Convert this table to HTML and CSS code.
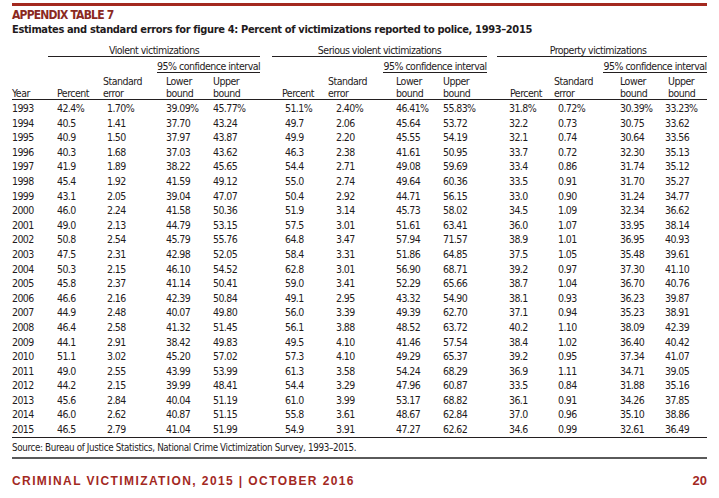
FILE: index.html
```html
<!DOCTYPE html>
<html lang="en">
<head>
<meta charset="utf-8">
<title>Appendix Table 7</title>
<link rel="stylesheet" href="styles.css">
</head>
<body>
<div class="page">
  <div class="bar"></div>
  <div class="kicker">APPENDIX TABLE 7</div>
  <h1 class="title">Estimates and standard errors for figure 4: Percent of victimizations reported to police, 1993–2015</h1>
  <table class="data">
    <colgroup>
      <col class="w-year"><col class="w55"><col class="w54"><col class="w53"><col class="w50">
      <col class="w-gap1">
      <col class="w55"><col class="w56"><col class="w57"><col class="w47">
      <col class="w-gap2">
      <col class="w57"><col class="w49"><col class="w57"><col class="w47">
    </colgroup>
    <thead>
      <tr class="h1">
        <th></th>
        <th colspan="4" class="grp">Violent victimizations</th>
        <th></th>
        <th colspan="4" class="grp">Serious violent victimizations</th>
        <th></th>
        <th colspan="4" class="grp grp-p">Property victimizations</th>
      </tr>
      <tr class="h2">
        <th colspan="3"></th>
        <th colspan="2" class="ci">95% confidence interval</th>
        <th colspan="3"></th>
        <th colspan="2" class="ci">95% confidence interval</th>
        <th colspan="3"></th>
        <th colspan="2" class="ci">95% confidence interval</th>
      </tr>
      <tr class="h3">
        <th>Year</th><th>Percent</th><th>Standard<br>error</th><th>Lower<br>bound</th><th>Upper<br>bound</th>
        <th></th>
        <th>Percent</th><th>Standard<br>error</th><th>Lower<br>bound</th><th>Upper<br>bound</th>
        <th></th>
        <th>Percent</th><th>Standard<br>error</th><th>Lower<br>bound</th><th>Upper<br>bound</th>
      </tr>
    </thead>
    <tbody>
      <tr><td>1993</td><td>42.4%</td><td>1.70%</td><td>39.09%</td><td>45.77%</td><td></td><td>51.1%</td><td>2.40%</td><td>46.41%</td><td>55.83%</td><td></td><td>31.8%</td><td>0.72%</td><td>30.39%</td><td>33.23%</td></tr>
      <tr><td>1994</td><td>40.5</td><td>1.41</td><td>37.70</td><td>43.24</td><td></td><td>49.7</td><td>2.06</td><td>45.64</td><td>53.72</td><td></td><td>32.2</td><td>0.73</td><td>30.75</td><td>33.62</td></tr>
      <tr><td>1995</td><td>40.9</td><td>1.50</td><td>37.97</td><td>43.87</td><td></td><td>49.9</td><td>2.20</td><td>45.55</td><td>54.19</td><td></td><td>32.1</td><td>0.74</td><td>30.64</td><td>33.56</td></tr>
      <tr><td>1996</td><td>40.3</td><td>1.68</td><td>37.03</td><td>43.62</td><td></td><td>46.3</td><td>2.38</td><td>41.61</td><td>50.95</td><td></td><td>33.7</td><td>0.72</td><td>32.30</td><td>35.13</td></tr>
      <tr><td>1997</td><td>41.9</td><td>1.89</td><td>38.22</td><td>45.65</td><td></td><td>54.4</td><td>2.71</td><td>49.08</td><td>59.69</td><td></td><td>33.4</td><td>0.86</td><td>31.74</td><td>35.12</td></tr>
      <tr><td>1998</td><td>45.4</td><td>1.92</td><td>41.59</td><td>49.12</td><td></td><td>55.0</td><td>2.74</td><td>49.64</td><td>60.36</td><td></td><td>33.5</td><td>0.91</td><td>31.70</td><td>35.27</td></tr>
      <tr><td>1999</td><td>43.1</td><td>2.05</td><td>39.04</td><td>47.07</td><td></td><td>50.4</td><td>2.92</td><td>44.71</td><td>56.15</td><td></td><td>33.0</td><td>0.90</td><td>31.24</td><td>34.77</td></tr>
      <tr><td>2000</td><td>46.0</td><td>2.24</td><td>41.58</td><td>50.36</td><td></td><td>51.9</td><td>3.14</td><td>45.73</td><td>58.02</td><td></td><td>34.5</td><td>1.09</td><td>32.34</td><td>36.62</td></tr>
      <tr><td>2001</td><td>49.0</td><td>2.13</td><td>44.79</td><td>53.15</td><td></td><td>57.5</td><td>3.01</td><td>51.61</td><td>63.41</td><td></td><td>36.0</td><td>1.07</td><td>33.95</td><td>38.14</td></tr>
      <tr><td>2002</td><td>50.8</td><td>2.54</td><td>45.79</td><td>55.76</td><td></td><td>64.8</td><td>3.47</td><td>57.94</td><td>71.57</td><td></td><td>38.9</td><td>1.01</td><td>36.95</td><td>40.93</td></tr>
      <tr><td>2003</td><td>47.5</td><td>2.31</td><td>42.98</td><td>52.05</td><td></td><td>58.4</td><td>3.31</td><td>51.86</td><td>64.85</td><td></td><td>37.5</td><td>1.05</td><td>35.48</td><td>39.61</td></tr>
      <tr><td>2004</td><td>50.3</td><td>2.15</td><td>46.10</td><td>54.52</td><td></td><td>62.8</td><td>3.01</td><td>56.90</td><td>68.71</td><td></td><td>39.2</td><td>0.97</td><td>37.30</td><td>41.10</td></tr>
      <tr><td>2005</td><td>45.8</td><td>2.37</td><td>41.14</td><td>50.41</td><td></td><td>59.0</td><td>3.41</td><td>52.29</td><td>65.66</td><td></td><td>38.7</td><td>1.04</td><td>36.70</td><td>40.76</td></tr>
      <tr><td>2006</td><td>46.6</td><td>2.16</td><td>42.39</td><td>50.84</td><td></td><td>49.1</td><td>2.95</td><td>43.32</td><td>54.90</td><td></td><td>38.1</td><td>0.93</td><td>36.23</td><td>39.87</td></tr>
      <tr><td>2007</td><td>44.9</td><td>2.48</td><td>40.07</td><td>49.80</td><td></td><td>56.0</td><td>3.39</td><td>49.39</td><td>62.70</td><td></td><td>37.1</td><td>0.94</td><td>35.23</td><td>38.91</td></tr>
      <tr><td>2008</td><td>46.4</td><td>2.58</td><td>41.32</td><td>51.45</td><td></td><td>56.1</td><td>3.88</td><td>48.52</td><td>63.72</td><td></td><td>40.2</td><td>1.10</td><td>38.09</td><td>42.39</td></tr>
      <tr><td>2009</td><td>44.1</td><td>2.91</td><td>38.42</td><td>49.83</td><td></td><td>49.5</td><td>4.10</td><td>41.46</td><td>57.54</td><td></td><td>38.4</td><td>1.02</td><td>36.40</td><td>40.42</td></tr>
      <tr><td>2010</td><td>51.1</td><td>3.02</td><td>45.20</td><td>57.02</td><td></td><td>57.3</td><td>4.10</td><td>49.29</td><td>65.37</td><td></td><td>39.2</td><td>0.95</td><td>37.34</td><td>41.07</td></tr>
      <tr><td>2011</td><td>49.0</td><td>2.55</td><td>43.99</td><td>53.99</td><td></td><td>61.3</td><td>3.58</td><td>54.24</td><td>68.29</td><td></td><td>36.9</td><td>1.11</td><td>34.71</td><td>39.05</td></tr>
      <tr><td>2012</td><td>44.2</td><td>2.15</td><td>39.99</td><td>48.41</td><td></td><td>54.4</td><td>3.29</td><td>47.96</td><td>60.87</td><td></td><td>33.5</td><td>0.84</td><td>31.88</td><td>35.16</td></tr>
      <tr><td>2013</td><td>45.6</td><td>2.84</td><td>40.04</td><td>51.19</td><td></td><td>61.0</td><td>3.99</td><td>53.17</td><td>68.82</td><td></td><td>36.1</td><td>0.91</td><td>34.26</td><td>37.85</td></tr>
      <tr><td>2014</td><td>46.0</td><td>2.62</td><td>40.87</td><td>51.15</td><td></td><td>55.8</td><td>3.61</td><td>48.67</td><td>62.84</td><td></td><td>37.0</td><td>0.96</td><td>35.10</td><td>38.86</td></tr>
      <tr><td>2015</td><td>46.5</td><td>2.79</td><td>41.04</td><td>51.99</td><td></td><td>54.9</td><td>3.91</td><td>47.27</td><td>62.62</td><td></td><td>34.6</td><td>0.99</td><td>32.61</td><td>36.49</td></tr>
    </tbody>
  </table>
  <p class="source">Source: Bureau of Justice Statistics, National Crime Victimization Survey, 1993–2015.</p>
  <footer class="footer">
    <span class="pub">CRIMINAL VICTIMIZATION, 2015 | OCTOBER 2016</span>
    <span class="pageno">20</span>
  </footer>
</div>
</body>
</html>
```

FILE: styles.css
```css
html, body {
  margin: 0;
  padding: 0;
  background: #ffffff;
}

.page {
  width: 695px;
  padding: 3px 12px 0 12px;
  color: #1f1b1c;
  font-family: "DejaVu Sans Condensed", "DejaVu Sans", sans-serif;
  font-stretch: condensed;
}

.bar {
  height: 3px;
  background: #a3291f;
}

.kicker {
  margin-top: 2px;
  font-size: 12px;
  line-height: 14px;
  font-weight: bold;
  letter-spacing: -0.8px;
  color: #8b2a1f;
}

.title {
  margin: 1px 0 0 0;
  font-size: 11px;
  line-height: 14px;
  font-weight: bold;
  letter-spacing: -0.35px;
  color: #1f1b1c;
}

.data {
  border-collapse: collapse;
  border-spacing: 0;
  table-layout: fixed;
  width: 695px;
  margin-top: 1px;
}

.w-year { width: 36px; }
.w55 { width: 55px; }
.w54 { width: 54px; }
.w53 { width: 53px; }
.w50 { width: 50px; }
.w56 { width: 56px; }
.w57 { width: 57px; }
.w47 { width: 47px; }
.w49 { width: 49px; }
.w-gap1 { width: 12px; }
.w-gap2 { width: 10px; }

.data th {
  font-weight: normal;
  font-size: 10.5px;
  letter-spacing: -0.5px;
  padding: 0;
  text-align: left;
  vertical-align: bottom;
  white-space: nowrap;
}

.h1 th {
  height: 18px;
  line-height: 11px;
}

.grp {
  text-align: center !important;
  border-bottom: 1px solid #231f20;
}

.grp-p {
  padding-right: 8px !important;
}

.h2 th {
  height: 15px;
  line-height: 11px;
}

.ci {
  text-align: center !important;
  border-bottom: 1px solid #231f20;
}

.h3 th {
  height: 26px;
  line-height: 12px;
  border-bottom: 1px solid #231f20;
}

.h3 th:nth-child(2) { padding-left: 9px; }
.h3 th:nth-child(3) { padding-left: 0; }
.h3 th:nth-child(4) { padding-left: 9px; }
.h3 th:nth-child(5) { padding-left: 3px; }
.h3 th:nth-child(7) { padding-left: 10px; }
.h3 th:nth-child(8) { padding-left: 1px; }
.h3 th:nth-child(9) { padding-left: 13px; }
.h3 th:nth-child(10) { padding-left: 3px; }
.h3 th:nth-child(12) { padding-left: 13px; }
.h3 th:nth-child(13) { padding-left: 0; }
.h3 th:nth-child(14) { padding-left: 17px; }
.h3 th:nth-child(15) { padding-left: 8px; }

.data td {
  font-size: 10.5px;
  letter-spacing: -0.6px;
  line-height: 14.6px;
  height: 14.6px;
  padding: 0;
  white-space: nowrap;
}

.data tbody tr:first-child td { padding-top: 1px; }

.data td:nth-child(2) { padding-left: 9px; }
.data td:nth-child(3) { padding-left: 4px; }
.data td:nth-child(4) { padding-left: 9px; }
.data td:nth-child(5) { padding-left: 3px; }
.data td:nth-child(7) { padding-left: 13px; }
.data td:nth-child(8) { padding-left: 9px; }
.data td:nth-child(9) { padding-left: 13px; }
.data td:nth-child(10) { padding-left: 3px; }
.data td:nth-child(12) { padding-left: 12px; }
.data td:nth-child(13) { padding-left: 4px; }
.data td:nth-child(14) { padding-left: 17px; }
.data td:nth-child(15) { padding-left: 5px; }

.source {
  margin: 0;
  padding: 3px 0 0 0;
  height: 16px;
  font-size: 9.75px;
  letter-spacing: -0.35px;
  line-height: 14px;
  border-top: 1px solid #231f20;
  border-bottom: 2px solid #5a5a5a;
}

.footer {
  display: flex;
  justify-content: space-between;
  align-items: baseline;
  margin-top: 15px;
  color: #a3291f;
  font-family: "Liberation Sans", Arial, sans-serif;
  font-stretch: normal;
  font-weight: bold;
}

.pub {
  font-size: 12px;
  letter-spacing: 1.4px;
  line-height: 14px;
}

.pageno {
  font-size: 13px;
  line-height: 14px;
}
```
